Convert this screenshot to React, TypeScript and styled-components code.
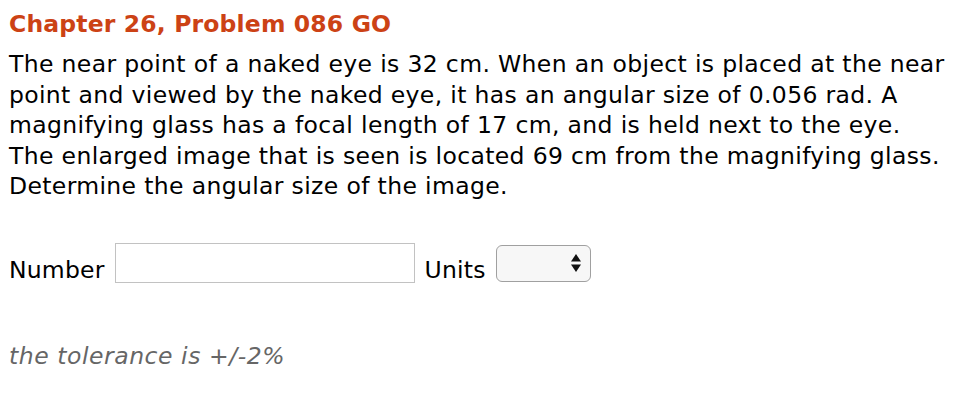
import React from "react";
import styled, { createGlobalStyle } from "styled-components";

const Global = createGlobalStyle`
  html, body { margin: 0; padding: 0; background: #ffffff; }
  body { font-family: Verdana, "DejaVu Sans", sans-serif; color: #000; }
`;

const Page = styled.div`
  padding: 9px 10px 0 9px;
  display: flex;
  flex-direction: column;
`;

const Title = styled.h1`
  margin: 0;
  font-size: 23.5px;
  font-weight: bold;
  color: #cc4215;
  line-height: 30px;
  letter-spacing: 0.15px;
`;

const Question = styled.p`
  margin: 10px 0 0 0;
  font-size: 23.5px;
  line-height: 30.5px;
  letter-spacing: 0.35px;
`;

const AnswerRow = styled.div`
  display: flex;
  align-items: center;
  margin-top: 40px;
  gap: 10px;
`;

const Label = styled.span`
  font-size: 23.5px;
  line-height: 28px;
  letter-spacing: 0.2px;
  margin-top: 14px;
  align-self: flex-start;
`;

const NumberInput = styled.input`
  box-sizing: border-box;
  width: 300px;
  height: 40px;
  border: 1px solid #c2c2c2;
  margin: 0;
  padding: 0 6px;
  font-size: 20px;
  outline: none;
`;

const SelectBox = styled.div`
  box-sizing: border-box;
  width: 95px;
  height: 37px;
  margin-top: 1px;
  border: 1.5px solid #a0a0a0;
  border-radius: 6px;
  background: #f7f7f7;
  display: flex;
  align-items: center;
  justify-content: flex-end;
  padding-right: 9px;
`;

const Tolerance = styled.p`
  margin: 58px 0 0 0;
  font-size: 23.5px;
  font-style: italic;
  color: #666666;
  line-height: 28px;
  letter-spacing: 0.55px;
`;

const Arrows = () => (
  <svg width="10" height="18" viewBox="0 0 10 18">
    <polygon points="5,0 10,7.5 0,7.5" fill="#111" />
    <polygon points="0,10.5 10,10.5 5,18" fill="#111" />
  </svg>
);

export default function App() {
  return (
    <>
      <Global />
      <Page>
        <Title>Chapter 26, Problem 086 GO</Title>
        <Question>
          The near point of a naked eye is 32 cm. When an object is placed at the near
          <br />
          point and viewed by the naked eye, it has an angular size of 0.056 rad. A
          <br />
          magnifying glass has a focal length of 17 cm, and is held next to the eye.
          <br />
          The enlarged image that is seen is located 69 cm from the magnifying glass.
          <br />
          Determine the angular size of the image.
        </Question>
        <AnswerRow>
          <Label>Number</Label>
          <NumberInput type="text" />
          <Label>Units</Label>
          <SelectBox>
            <Arrows />
          </SelectBox>
        </AnswerRow>
        <Tolerance>the tolerance is +/-2%</Tolerance>
      </Page>
    </>
  );
}
